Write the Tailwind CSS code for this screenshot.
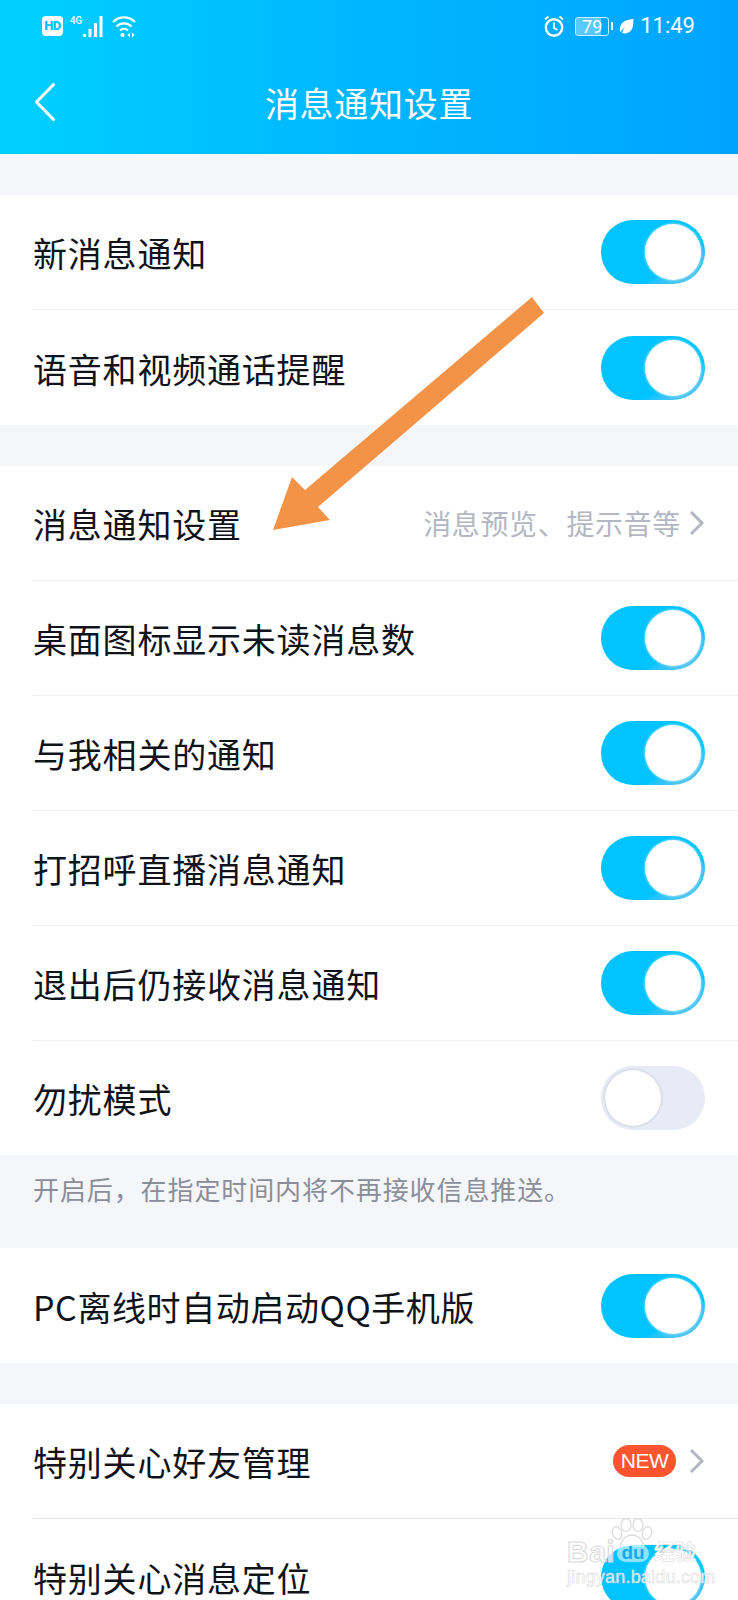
<!DOCTYPE html>
<html lang="zh-CN">
<head>
  <meta charset="UTF-8">
  <meta name="viewport" content="width=device-width, initial-scale=1.0">
  <title>消息通知设置</title>
  <script src="https://cdn.jsdelivr.net/npm/@tailwindcss/browser@4"></script>
</head>

<body class="bg-[#f4f6fa] h-[1600px] w-[738px] overflow-hidden relative font-['Noto_Sans_CJK_SC','Noto_Sans',sans-serif] text-[#10131a]">

  <!-- Header -->
  <div class="h-[154px] bg-gradient-to-r from-[#00d0ff] via-[#00b6ff] to-[#00a4ff] text-white relative">
    <!-- Status bar -->
    <div class="h-[52px] pl-[42px] pr-[43px] flex items-center justify-between">
      <div class="flex items-center">
        <span class="w-[21px] h-[20px] rounded-[4px] bg-white text-[#00c4ff] text-[13px] font-black leading-[20px] text-center font-['Roboto'] tracking-[-0.5px]">HD</span>
        <svg width="33" height="24" viewBox="0 0 33 24" class="ml-[7px]" fill="#fff">
          <text x="0" y="10" font-size="11" font-family="Roboto" font-weight="500" textLength="12" lengthAdjust="spacingAndGlyphs">4G</text>
          <rect x="13" y="20" width="3" height="3"/><rect x="18.500" y="15" width="3" height="8"/><rect x="24" y="9" width="3" height="14"/><rect x="29.500" y="2" width="3" height="21"/>
        </svg>
        <svg width="24" height="24" viewBox="0 0 24 24" class="ml-[9px]" fill="none" stroke="#fff" stroke-width="2.1">
          <path d="M1 8 A15.500 15.500 0 0 1 23 8"/><path d="M4.500 12.500 A10.500 10.500 0 0 1 19.500 12.500"/><path d="M8 16.500 A5.500 5.500 0 0 1 16 16.500"/>
          <circle cx="10.500" cy="21" r="2" fill="#fff" stroke="none"/>
          <path d="M18 18.500 l-2.500 2.500 l2.500 2.500z M20 18.500 l2.500 2.500 l-2.500 2.500z" fill="#fff" stroke="none"/>
        </svg>
      </div>
      <div class="flex items-center">
        <svg width="24" height="24" viewBox="0 0 24 24" fill="none" stroke="#fff" stroke-width="2.4">
          <circle cx="12" cy="13.500" r="8.200"/><path d="M12 8.500v5.500l3.500 2" stroke-width="1.800"/><path d="M3 5.500 L6.500 2.500 M21 5.500 L17.500 2.500" stroke-width="1.800"/>
        </svg>
        <div class="ml-[9px] w-[34px] h-[19px] rounded-[3px] border border-white/80 relative overflow-hidden">
          <div class="absolute inset-y-0 left-0 w-[79%] bg-white/35"></div>
          <span class="absolute inset-0 text-center text-[18px] leading-[17px] font-['Roboto']">79</span>
        </div>
        <div class="w-[2px] h-[8px] bg-white ml-[2px]"></div>
        <svg width="15" height="16" viewBox="0 0 16 16" class="ml-[6px]" fill="#fff"><path d="M15.500 0.500C9 1 2 3 1 10c-.2 1.500 0 3 .6 4.500L6 9l-3 6.500c5 1.500 10-1 11.500-6 .7-3 .8-6 1-9z"/></svg>
        <span class="ml-[6px] text-[22px] leading-[24px] font-['Roboto']">11:49</span>
      </div>
    </div>
    <!-- Title bar -->
    <div class="h-[102px] flex items-center justify-center relative">
      <svg width="24" height="40" viewBox="0 0 24 40" class="absolute left-[33px] top-[30px]" fill="none" stroke="#fff" stroke-width="3" stroke-linecap="round" stroke-linejoin="round">
        <path d="M20.500 2.500 L3.500 20 L20.500 37.500"/>
      </svg>
      <h1 class="text-[34px] font-normal tracking-[0.7px] leading-none">消息通知设置</h1>
    </div>
  </div>

  <!-- Group 1 -->
  <div class="mt-[41px] bg-white">
    <div class="h-[115px] ml-[33px] pr-[33px] flex items-center justify-between border-b border-[#eef0f3]">
      <span class="text-[34px] leading-none tracking-[0.8px] pt-[2px]">新消息通知</span>
      <div class="w-[104px] h-[64px] rounded-full bg-gradient-to-br from-[#00c3ff] from-70% to-[#62c6e6] relative">
        <div class="absolute top-[4px] right-[4px] w-[56px] h-[56px] rounded-full bg-white shadow-[0_0_3px_rgba(255,255,255,0.8)]"></div>
      </div>
    </div>
    <div class="h-[115px] pl-[33px] pr-[33px] flex items-center justify-between">
      <span class="text-[34px] leading-none tracking-[0.8px] pt-[2px]">语音和视频通话提醒</span>
      <div class="w-[104px] h-[64px] rounded-full bg-gradient-to-br from-[#00c3ff] from-70% to-[#62c6e6] relative">
        <div class="absolute top-[4px] right-[4px] w-[56px] h-[56px] rounded-full bg-white shadow-[0_0_3px_rgba(255,255,255,0.8)]"></div>
      </div>
    </div>
  </div>

  <!-- Group 2 -->
  <div class="mt-[41px] bg-white">
    <div class="h-[115px] ml-[33px] pr-[33px] flex items-center justify-between border-b border-[#eef0f3]">
      <span class="text-[34px] leading-none tracking-[0.8px] pt-[2px]">消息通知设置</span>
      <div class="flex items-center">
        <span class="text-[28px] leading-none tracking-[0.65px] text-[#b4b7c2]">消息预览、提示音等</span>
        <svg width="16" height="26" viewBox="0 0 16 26" class="ml-[8px]" fill="none" stroke="#b4b7c2" stroke-width="3"><path d="M2 2 L13 13 L2 24"/></svg>
      </div>
    </div>
    <div class="h-[115px] ml-[33px] pr-[33px] flex items-center justify-between border-b border-[#eef0f3]">
      <span class="text-[34px] leading-none tracking-[0.8px] pt-[2px]">桌面图标显示未读消息数</span>
      <div class="w-[104px] h-[64px] rounded-full bg-gradient-to-br from-[#00c3ff] from-70% to-[#62c6e6] relative">
        <div class="absolute top-[4px] right-[4px] w-[56px] h-[56px] rounded-full bg-white shadow-[0_0_3px_rgba(255,255,255,0.8)]"></div>
      </div>
    </div>
    <div class="h-[115px] ml-[33px] pr-[33px] flex items-center justify-between border-b border-[#eef0f3]">
      <span class="text-[34px] leading-none tracking-[0.8px] pt-[2px]">与我相关的通知</span>
      <div class="w-[104px] h-[64px] rounded-full bg-gradient-to-br from-[#00c3ff] from-70% to-[#62c6e6] relative">
        <div class="absolute top-[4px] right-[4px] w-[56px] h-[56px] rounded-full bg-white shadow-[0_0_3px_rgba(255,255,255,0.8)]"></div>
      </div>
    </div>
    <div class="h-[115px] ml-[33px] pr-[33px] flex items-center justify-between border-b border-[#eef0f3]">
      <span class="text-[34px] leading-none tracking-[0.8px] pt-[2px]">打招呼直播消息通知</span>
      <div class="w-[104px] h-[64px] rounded-full bg-gradient-to-br from-[#00c3ff] from-70% to-[#62c6e6] relative">
        <div class="absolute top-[4px] right-[4px] w-[56px] h-[56px] rounded-full bg-white shadow-[0_0_3px_rgba(255,255,255,0.8)]"></div>
      </div>
    </div>
    <div class="h-[115px] ml-[33px] pr-[33px] flex items-center justify-between border-b border-[#eef0f3]">
      <span class="text-[34px] leading-none tracking-[0.8px] pt-[2px]">退出后仍接收消息通知</span>
      <div class="w-[104px] h-[64px] rounded-full bg-gradient-to-br from-[#00c3ff] from-70% to-[#62c6e6] relative">
        <div class="absolute top-[4px] right-[4px] w-[56px] h-[56px] rounded-full bg-white shadow-[0_0_3px_rgba(255,255,255,0.8)]"></div>
      </div>
    </div>
    <div class="h-[114px] pl-[33px] pr-[33px] flex items-center justify-between">
      <span class="text-[34px] leading-none tracking-[0.8px] pt-[2px]">勿扰模式</span>
      <div class="w-[104px] h-[64px] rounded-full bg-[#e8ebf5] relative">
        <div class="absolute top-[4px] left-[4px] w-[56px] h-[56px] rounded-full bg-white shadow-[0_0_3px_rgba(120,125,150,0.4)]"></div>
      </div>
    </div>
  </div>

  <!-- Note -->
  <p class="h-[93px] pl-[33px] pt-[17px] text-[26px] leading-[34px] tracking-[0.9px] text-[#8b8e99]">开启后，在指定时间内将不再接收信息推送。</p>

  <!-- Group 3 -->
  <div class="bg-white">
    <div class="h-[115px] pl-[33px] pr-[33px] flex items-center justify-between">
      <span class="text-[34px] leading-none tracking-[0.6px] pt-[2px]">PC离线时自动启动QQ手机版</span>
      <div class="w-[104px] h-[64px] rounded-full bg-gradient-to-br from-[#00c3ff] from-70% to-[#62c6e6] relative">
        <div class="absolute top-[4px] right-[4px] w-[56px] h-[56px] rounded-full bg-white shadow-[0_0_3px_rgba(255,255,255,0.8)]"></div>
      </div>
    </div>
  </div>

  <!-- Group 4 -->
  <div class="mt-[41px] bg-white">
    <div class="h-[115px] ml-[33px] pr-[33px] flex items-center justify-between border-b border-[#e4e5e8]">
      <span class="text-[34px] leading-none tracking-[0.8px] pt-[2px]">特别关心好友管理</span>
      <div class="flex items-center">
        <span class="w-[63px] h-[32px] rounded-full bg-[#fb5530] text-white text-[21px] leading-[32px] tracking-[-0.5px] text-center font-['Liberation_Sans']">NEW</span>
        <svg width="16" height="26" viewBox="0 0 16 26" class="ml-[13px]" fill="none" stroke="#b4b7c2" stroke-width="3"><path d="M2 2 L13 13 L2 24"/></svg>
      </div>
    </div>
    <div class="h-[115px] pl-[33px] pr-[33px] flex items-center justify-between">
      <span class="text-[34px] leading-none tracking-[0.8px] pt-[2px]">特别关心消息定位</span>
      <div class="w-[104px] h-[64px] rounded-full bg-gradient-to-br from-[#00c3ff] from-70% to-[#62c6e6] relative">
        <div class="absolute top-[4px] right-[4px] w-[56px] h-[56px] rounded-full bg-white shadow-[0_0_3px_rgba(255,255,255,0.8)]"></div>
      </div>
    </div>
  </div>

  <!-- Orange arrow annotation -->
  <svg class="absolute left-[270px] top-[295px]" width="280" height="240" viewBox="270 295 280 240">
    <polygon points="532,297 544,313 318,507 330,520 273,530 292,477 305,490" fill="#f39348"/>
  </svg>

  <!-- Baidu watermark -->
  <div class="absolute left-[567px] top-[1518px] w-[140px] h-[72px]">
    <svg class="absolute left-[44px] top-[0px]" width="42" height="34" viewBox="0 0 42 34" fill="#ffffff" fill-opacity="0.35" stroke="#dcdcdc" stroke-width="1.300">
      <ellipse cx="6" cy="15" rx="4.500" ry="6.500" transform="rotate(-20 6 15)"/>
      <ellipse cx="15" cy="7" rx="5" ry="6.500"/>
      <ellipse cx="27" cy="7" rx="5" ry="6.500"/>
      <ellipse cx="36" cy="15" rx="4.500" ry="6.500" transform="rotate(20 36 15)"/>
      <path d="M9 29 Q12 17 21 17 Q30 17 33 29"/>
    </svg>
    <span class="absolute left-0 top-[19px] text-[30px] leading-none font-bold font-['Liberation_Sans'] tracking-[0.5px] text-white/70 [-webkit-text-stroke:1px_#d8d8d8]">Bai</span>
    <span class="absolute left-[50px] top-[27px] w-[32px] h-[17px] rounded-full bg-white/55 text-[#1aa9e8] text-[19px] leading-[15px] text-center font-bold font-['Liberation_Sans']">du</span>
    <span class="absolute left-[87px] top-[22px] text-[21px] leading-none font-semibold text-white [-webkit-text-stroke:0.5px_#d8d8d8]">经验</span>
    <span class="absolute left-0 top-[49px] text-[18px] leading-[20px] tracking-[0.2px] font-['Liberation_Sans'] whitespace-nowrap text-white/80 [-webkit-text-stroke:0.5px_#d8d8d8]">jingyan.baidu.com</span>
  </div>

</body>
</html>
